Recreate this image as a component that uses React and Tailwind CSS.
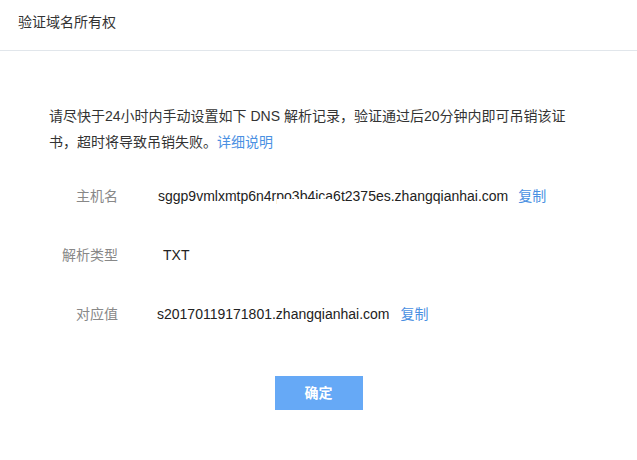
export default function App() {
  return (
    <div
      className="w-[637px] h-[460px] bg-white text-[14px] text-[#333] font-['Liberation_Sans','Noto_Sans_CJK_SC',sans-serif]"
    >
      <div className="h-[51px] flex items-center pl-[18px] pb-[6px] border-b border-[#e1e6eb] text-[#333]">
        验证域名所有权
      </div>
      <div className="pl-[49px] pt-[52px]">
        <p className="w-[524px] leading-[26px] text-[#333]">
          请尽快于24小时内手动设置如下 DNS 解析记录，验证通过后20分钟内即可吊销该证书，超时将导致吊销失败。
          <span className="text-[#4a90e2]">详细说明</span>
        </p>
        <div className="mt-[31px] flex flex-col gap-[39px]">
          <div className="flex items-center h-[20px]">
            <span className="w-[69px] text-right text-[#888]">主机名</span>
            <span className="relative ml-[40px] text-[#222]">
              sggp9vmlxmtp6n4rpo3b4ica6t2375es.zhangqianhai.com
              <span className="absolute left-[119px] top-[13px] w-[58px] h-[8px] bg-white"></span>
            </span>
            <span className="ml-[10px] text-[#4a90e2]">复制</span>
          </div>
          <div className="flex items-center h-[20px]">
            <span className="w-[69px] text-right text-[#888]">解析类型</span>
            <span className="ml-[45px] text-[#222]">TXT</span>
          </div>
          <div className="flex items-center h-[20px]">
            <span className="w-[69px] text-right text-[#888]">对应值</span>
            <span className="ml-[39px] text-[#222]">s20170119171801.zhangqianhai.com</span>
            <span className="ml-[11px] text-[#4a90e2]">复制</span>
          </div>
        </div>
      </div>
      <div className="flex justify-center mt-[52px]">
        <button className="w-[88px] h-[34px] bg-[#66a9f6] text-white font-bold text-[14px]">
          确定
        </button>
      </div>
    </div>
  );
}
